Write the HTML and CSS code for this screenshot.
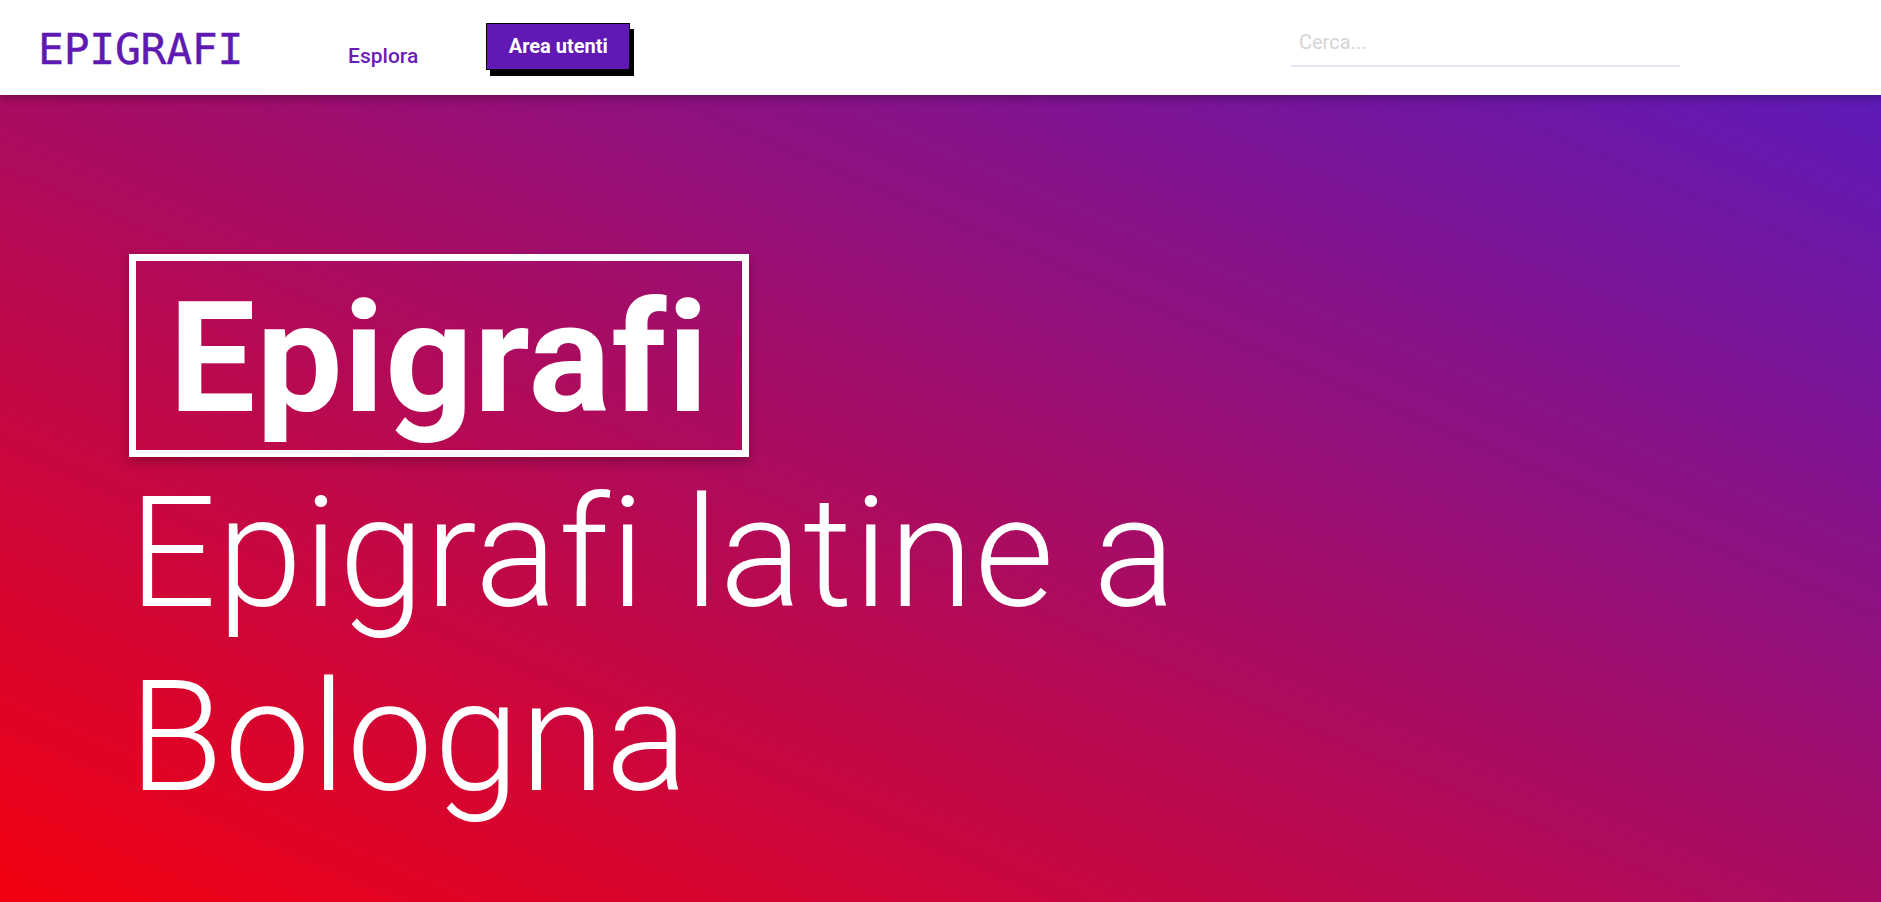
FILE: index.html
```html
<!DOCTYPE html>
<html lang="it">
<head>
<meta charset="utf-8">
<title>Epigrafi</title>
<link rel="stylesheet" href="styles.css">
</head>
<body>
<header class="topbar">
  <a class="logo" href="#">EPIGRAFI</a>
  <nav class="nav">
    <a class="nav-link" href="#">Esplora</a>
    <a class="btn-area" href="#">Area utenti</a>
  </nav>
  <div class="search">
    <input class="search-input" type="text" placeholder="Cerca...">
  </div>
</header>
<main class="hero">
  <div class="hero-inner">
    <h1 class="title-box">Epigrafi</h1>
    <p class="subtitle">Epigrafi latine a Bologna</p>
  </div>
</main>
</body>
</html>
```
FILE: styles.css
```css
* { box-sizing: border-box; }
html, body { margin: 0; padding: 0; }
body {
  font-family: Roboto, "Liberation Sans", sans-serif;
  background: #fff;
  overflow: hidden;
}
.topbar {
  position: relative;
  z-index: 2;
  height: 95px;
  display: flex;
  align-items: center;
  padding: 0 201px 0 38px;
  background: #fff;
  box-shadow: 0 2px 10px rgba(0, 0, 0, 0.35);
}
.logo {
  font-family: "DejaVu Sans Mono", "Liberation Mono", monospace;
  font-size: 43px;
  letter-spacing: -0.25px;
  line-height: 44px;
  color: #5f1ab3;
  text-decoration: none;
  margin-top: 2px;
  -webkit-text-stroke: 0.4px #5f1ab3;
}
.nav {
  display: flex;
  align-items: center;
  margin-left: 105px;
}
.nav-link {
  font-size: 21px;
  font-weight: 500;
  color: #6a1db8;
  text-decoration: none;
  margin-top: 17px;
}
.btn-area {
  margin-left: 68px;
  width: 144px;
  height: 47px;
  display: flex;
  align-items: center;
  justify-content: center;
  background: #6218b3;
  color: #fff;
  font-size: 20px;
  font-weight: 700;
  text-decoration: none;
  border: 1px solid #000;
  box-shadow: 4px 6px 0 #000;
  margin-top: -3px;
}
.search {
  margin-left: auto;
  width: 389px;
  margin-top: -6px;
}
.search-input {
  display: block;
  width: 100%;
  height: 45px;
  border: none;
  border-bottom: 2px solid #ebe3f5;
  padding: 0 8px 4px;
  font-family: Roboto, sans-serif;
  font-size: 20px;
  color: #333;
  outline: none;
  background: transparent;
}
.search-input::placeholder { color: #d4d4d4; }
.hero {
  height: 807px;
  background: linear-gradient(to top right, #f20010 0%, #a90c62 50%, #5e1ab8 100%);
  padding: 159px 0 0 129px;
}
.hero-inner {
  max-width: 1150px;
}
.title-box {
  display: inline-block;
  margin: 0;
  border: 7px solid #fff;
  padding: 6px 33px 0;
  height: 203px;
  color: #fff;
  font-size: 153.6px;
  line-height: 184px;
  font-weight: 700;
  letter-spacing: 0.9px;
  box-shadow: 0 5px 10px rgba(0, 0, 0, 0.25);
}
.subtitle {
  margin: 5px 0 0;
  color: #fff;
  font-size: 153.6px;
  line-height: 184px;
  font-weight: 300;
  letter-spacing: 1px;
}
```
